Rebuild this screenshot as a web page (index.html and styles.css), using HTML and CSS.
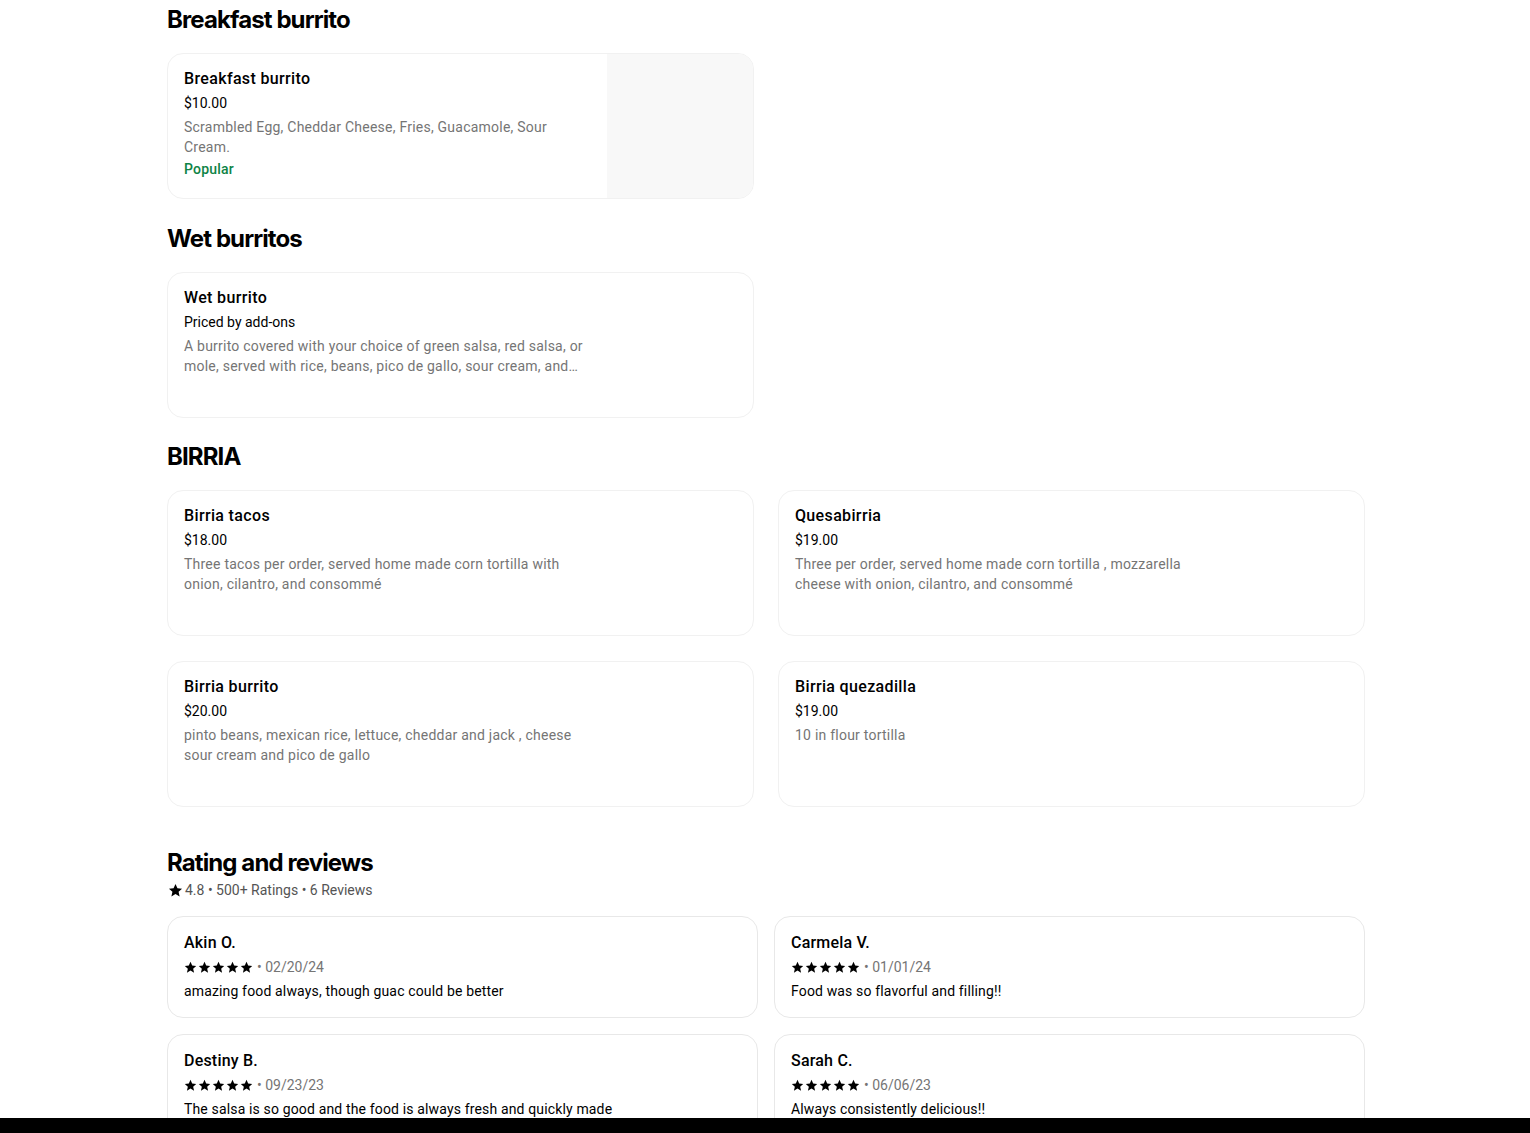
FILE: index.html
```html
<!DOCTYPE html>
<html lang="en">
<head>
<meta charset="utf-8">
<title>Menu</title>
<link rel="stylesheet" href="styles.css">
</head>
<body>
<main class="page">
  <section class="section">
    <h2 class="section-title">Breakfast burrito</h2>
    <div class="menu-grid">
      <div class="item-card">
        <div class="item-text">
          <div class="item-name">Breakfast burrito</div>
          <div class="item-price">$10.00</div>
          <div class="item-desc">Scrambled Egg, Cheddar Cheese, Fries, Guacamole, Sour Cream.</div>
          <div class="item-tag">Popular</div>
        </div>
        <div class="item-image"></div>
      </div>
    </div>
  </section>

  <section class="section">
    <h2 class="section-title">Wet burritos</h2>
    <div class="menu-grid">
      <div class="item-card">
        <div class="item-text">
          <div class="item-name">Wet burrito</div>
          <div class="item-price">Priced by add-ons</div>
          <div class="item-desc">A burrito covered with your choice of green salsa, red salsa, or mole, served with rice, beans, pico de gallo, sour cream, and…</div>
        </div>
        <div class="item-space"></div>
      </div>
    </div>
  </section>

  <section class="section">
    <h2 class="section-title">BIRRIA</h2>
    <div class="menu-grid">
      <div class="item-card">
        <div class="item-text">
          <div class="item-name">Birria tacos</div>
          <div class="item-price">$18.00</div>
          <div class="item-desc">Three tacos per order, served home made corn tortilla with onion, cilantro, and consommé</div>
        </div>
        <div class="item-space"></div>
      </div>
      <div class="item-card">
        <div class="item-text">
          <div class="item-name">Quesabirria</div>
          <div class="item-price">$19.00</div>
          <div class="item-desc">Three per order, served home made corn tortilla , mozzarella cheese with onion, cilantro, and consommé</div>
        </div>
        <div class="item-space"></div>
      </div>
      <div class="item-card">
        <div class="item-text">
          <div class="item-name">Birria burrito</div>
          <div class="item-price">$20.00</div>
          <div class="item-desc">pinto beans, mexican rice, lettuce, cheddar and jack , cheese sour cream and pico de gallo</div>
        </div>
        <div class="item-space"></div>
      </div>
      <div class="item-card">
        <div class="item-text">
          <div class="item-name">Birria quezadilla</div>
          <div class="item-price">$19.00</div>
          <div class="item-desc">10 in flour tortilla</div>
        </div>
        <div class="item-space"></div>
      </div>
    </div>
  </section>

  <section class="reviews">
    <h2 class="section-title">Rating and reviews</h2>
    <div class="rating-line">
      <svg class="star-lg" viewBox="0 0 24 24"><path d="M12 1.5l3.1 6.9 7.4.7-5.6 5 1.7 7.4L12 17.6l-6.6 3.9 1.7-7.4-5.6-5 7.4-.7z"/></svg>
      <span>4.8 • 500+ Ratings • 6 Reviews</span>
    </div>
    <div class="review-grid">
      <div class="review-card">
        <div class="review-name">Akin O.</div>
        <div class="review-meta">
          <span class="stars"><svg viewBox="0 0 24 24"><path d="M12 1.5l3.1 6.9 7.4.7-5.6 5 1.7 7.4L12 17.6l-6.6 3.9 1.7-7.4-5.6-5 7.4-.7z"/></svg><svg viewBox="0 0 24 24"><path d="M12 1.5l3.1 6.9 7.4.7-5.6 5 1.7 7.4L12 17.6l-6.6 3.9 1.7-7.4-5.6-5 7.4-.7z"/></svg><svg viewBox="0 0 24 24"><path d="M12 1.5l3.1 6.9 7.4.7-5.6 5 1.7 7.4L12 17.6l-6.6 3.9 1.7-7.4-5.6-5 7.4-.7z"/></svg><svg viewBox="0 0 24 24"><path d="M12 1.5l3.1 6.9 7.4.7-5.6 5 1.7 7.4L12 17.6l-6.6 3.9 1.7-7.4-5.6-5 7.4-.7z"/></svg><svg viewBox="0 0 24 24"><path d="M12 1.5l3.1 6.9 7.4.7-5.6 5 1.7 7.4L12 17.6l-6.6 3.9 1.7-7.4-5.6-5 7.4-.7z"/></svg></span>
          <span class="review-date">• 02/20/24</span>
        </div>
        <div class="review-text">amazing food always, though guac could be better</div>
      </div>
      <div class="review-card">
        <div class="review-name">Carmela V.</div>
        <div class="review-meta">
          <span class="stars"><svg viewBox="0 0 24 24"><path d="M12 1.5l3.1 6.9 7.4.7-5.6 5 1.7 7.4L12 17.6l-6.6 3.9 1.7-7.4-5.6-5 7.4-.7z"/></svg><svg viewBox="0 0 24 24"><path d="M12 1.5l3.1 6.9 7.4.7-5.6 5 1.7 7.4L12 17.6l-6.6 3.9 1.7-7.4-5.6-5 7.4-.7z"/></svg><svg viewBox="0 0 24 24"><path d="M12 1.5l3.1 6.9 7.4.7-5.6 5 1.7 7.4L12 17.6l-6.6 3.9 1.7-7.4-5.6-5 7.4-.7z"/></svg><svg viewBox="0 0 24 24"><path d="M12 1.5l3.1 6.9 7.4.7-5.6 5 1.7 7.4L12 17.6l-6.6 3.9 1.7-7.4-5.6-5 7.4-.7z"/></svg><svg viewBox="0 0 24 24"><path d="M12 1.5l3.1 6.9 7.4.7-5.6 5 1.7 7.4L12 17.6l-6.6 3.9 1.7-7.4-5.6-5 7.4-.7z"/></svg></span>
          <span class="review-date">• 01/01/24</span>
        </div>
        <div class="review-text">Food was so flavorful and filling!!</div>
      </div>
      <div class="review-card">
        <div class="review-name">Destiny B.</div>
        <div class="review-meta">
          <span class="stars"><svg viewBox="0 0 24 24"><path d="M12 1.5l3.1 6.9 7.4.7-5.6 5 1.7 7.4L12 17.6l-6.6 3.9 1.7-7.4-5.6-5 7.4-.7z"/></svg><svg viewBox="0 0 24 24"><path d="M12 1.5l3.1 6.9 7.4.7-5.6 5 1.7 7.4L12 17.6l-6.6 3.9 1.7-7.4-5.6-5 7.4-.7z"/></svg><svg viewBox="0 0 24 24"><path d="M12 1.5l3.1 6.9 7.4.7-5.6 5 1.7 7.4L12 17.6l-6.6 3.9 1.7-7.4-5.6-5 7.4-.7z"/></svg><svg viewBox="0 0 24 24"><path d="M12 1.5l3.1 6.9 7.4.7-5.6 5 1.7 7.4L12 17.6l-6.6 3.9 1.7-7.4-5.6-5 7.4-.7z"/></svg><svg viewBox="0 0 24 24"><path d="M12 1.5l3.1 6.9 7.4.7-5.6 5 1.7 7.4L12 17.6l-6.6 3.9 1.7-7.4-5.6-5 7.4-.7z"/></svg></span>
          <span class="review-date">• 09/23/23</span>
        </div>
        <div class="review-text">The salsa is so good and the food is always fresh and quickly made</div>
      </div>
      <div class="review-card">
        <div class="review-name">Sarah C.</div>
        <div class="review-meta">
          <span class="stars"><svg viewBox="0 0 24 24"><path d="M12 1.5l3.1 6.9 7.4.7-5.6 5 1.7 7.4L12 17.6l-6.6 3.9 1.7-7.4-5.6-5 7.4-.7z"/></svg><svg viewBox="0 0 24 24"><path d="M12 1.5l3.1 6.9 7.4.7-5.6 5 1.7 7.4L12 17.6l-6.6 3.9 1.7-7.4-5.6-5 7.4-.7z"/></svg><svg viewBox="0 0 24 24"><path d="M12 1.5l3.1 6.9 7.4.7-5.6 5 1.7 7.4L12 17.6l-6.6 3.9 1.7-7.4-5.6-5 7.4-.7z"/></svg><svg viewBox="0 0 24 24"><path d="M12 1.5l3.1 6.9 7.4.7-5.6 5 1.7 7.4L12 17.6l-6.6 3.9 1.7-7.4-5.6-5 7.4-.7z"/></svg><svg viewBox="0 0 24 24"><path d="M12 1.5l3.1 6.9 7.4.7-5.6 5 1.7 7.4L12 17.6l-6.6 3.9 1.7-7.4-5.6-5 7.4-.7z"/></svg></span>
          <span class="review-date">• 06/06/23</span>
        </div>
        <div class="review-text">Always consistently delicious!!</div>
      </div>
    </div>
  </section>
</main>
<div class="bottom-bar"></div>
</body>
</html>
```

FILE: styles.css
```css
* { box-sizing: border-box; }

html, body {
  margin: 0;
  padding: 0;
  background: #ffffff;
  color: #000000;
  font-family: Roboto, "Liberation Sans", sans-serif;
  overflow: hidden;
}

.page {
  width: 1198px;
  margin-left: 167px;
  padding-top: 4px;
}

.section {
  margin-bottom: 23.5px;
}

.section-title {
  margin: 0 0 17px 0;
  font-family: Inter, "Liberation Sans", sans-serif;
  font-weight: 700;
  font-size: 24px;
  line-height: 32px;
  letter-spacing: -0.9px;
  color: #000;
}

.menu-grid {
  display: grid;
  grid-template-columns: 1fr 1fr;
  column-gap: 24px;
  row-gap: 25px;
}

.item-card {
  display: flex;
  height: 146px;
  border: 1px solid #f1f1f1;
  border-radius: 16px;
  overflow: hidden;
  background: #fff;
}

.item-text {
  flex: 1;
  padding: 15px 16px 0 16px;
  min-width: 0;
}

.item-image {
  width: 146px;
  flex: none;
  background: #f8f8f8;
}

.item-space {
  width: 146px;
  flex: none;
}

.item-name {
  font-size: 16px;
  line-height: 20px;
  font-weight: 500;
  letter-spacing: 0.35px;
  color: #000;
}

.item-price {
  margin-top: 4px;
  font-size: 14px;
  line-height: 20px;
  color: #000;
}

.item-desc {
  margin-top: 4px;
  font-size: 14px;
  line-height: 20px;
  letter-spacing: 0.23px;
  color: #757575;
}

.item-tag {
  margin-top: 2px;
  font-size: 14px;
  line-height: 20px;
  font-weight: 500;
  letter-spacing: 0.2px;
  color: #0e8345;
}

.reviews {
  margin-top: 40px;
}

.reviews .section-title {
  margin-bottom: 1px;
}

.rating-line {
  display: flex;
  align-items: center;
  gap: 2px;
  font-size: 14px;
  line-height: 20px;
  color: #545454;
  margin-bottom: 16px;
  padding-left: 1px;
}

.star-lg {
  width: 15px;
  height: 15px;
  fill: #000;
}

.review-grid {
  display: grid;
  grid-template-columns: 1fr 1fr;
  column-gap: 16px;
  row-gap: 16px;
}

.review-card {
  height: 102px;
  border: 1px solid #e8e8e8;
  border-radius: 16px;
  padding: 16px 16px 0 16px;
}

.review-name {
  font-size: 16px;
  line-height: 20px;
  font-weight: 500;
  letter-spacing: 0.2px;
}

.review-meta {
  margin-top: 4px;
  display: flex;
  align-items: center;
  gap: 4px;
  font-size: 14px;
  line-height: 20px;
  color: #757575;
}

.stars {
  display: flex;
  gap: 1px;
}

.stars svg {
  width: 13px;
  height: 13px;
  fill: #000;
}

.review-text {
  margin-top: 4px;
  font-size: 14px;
  line-height: 20px;
  letter-spacing: 0.15px;
  color: #000;
}

.bottom-bar {
  position: fixed;
  left: 0;
  right: 0;
  bottom: 0;
  height: 15px;
  background: #000;
}
```
